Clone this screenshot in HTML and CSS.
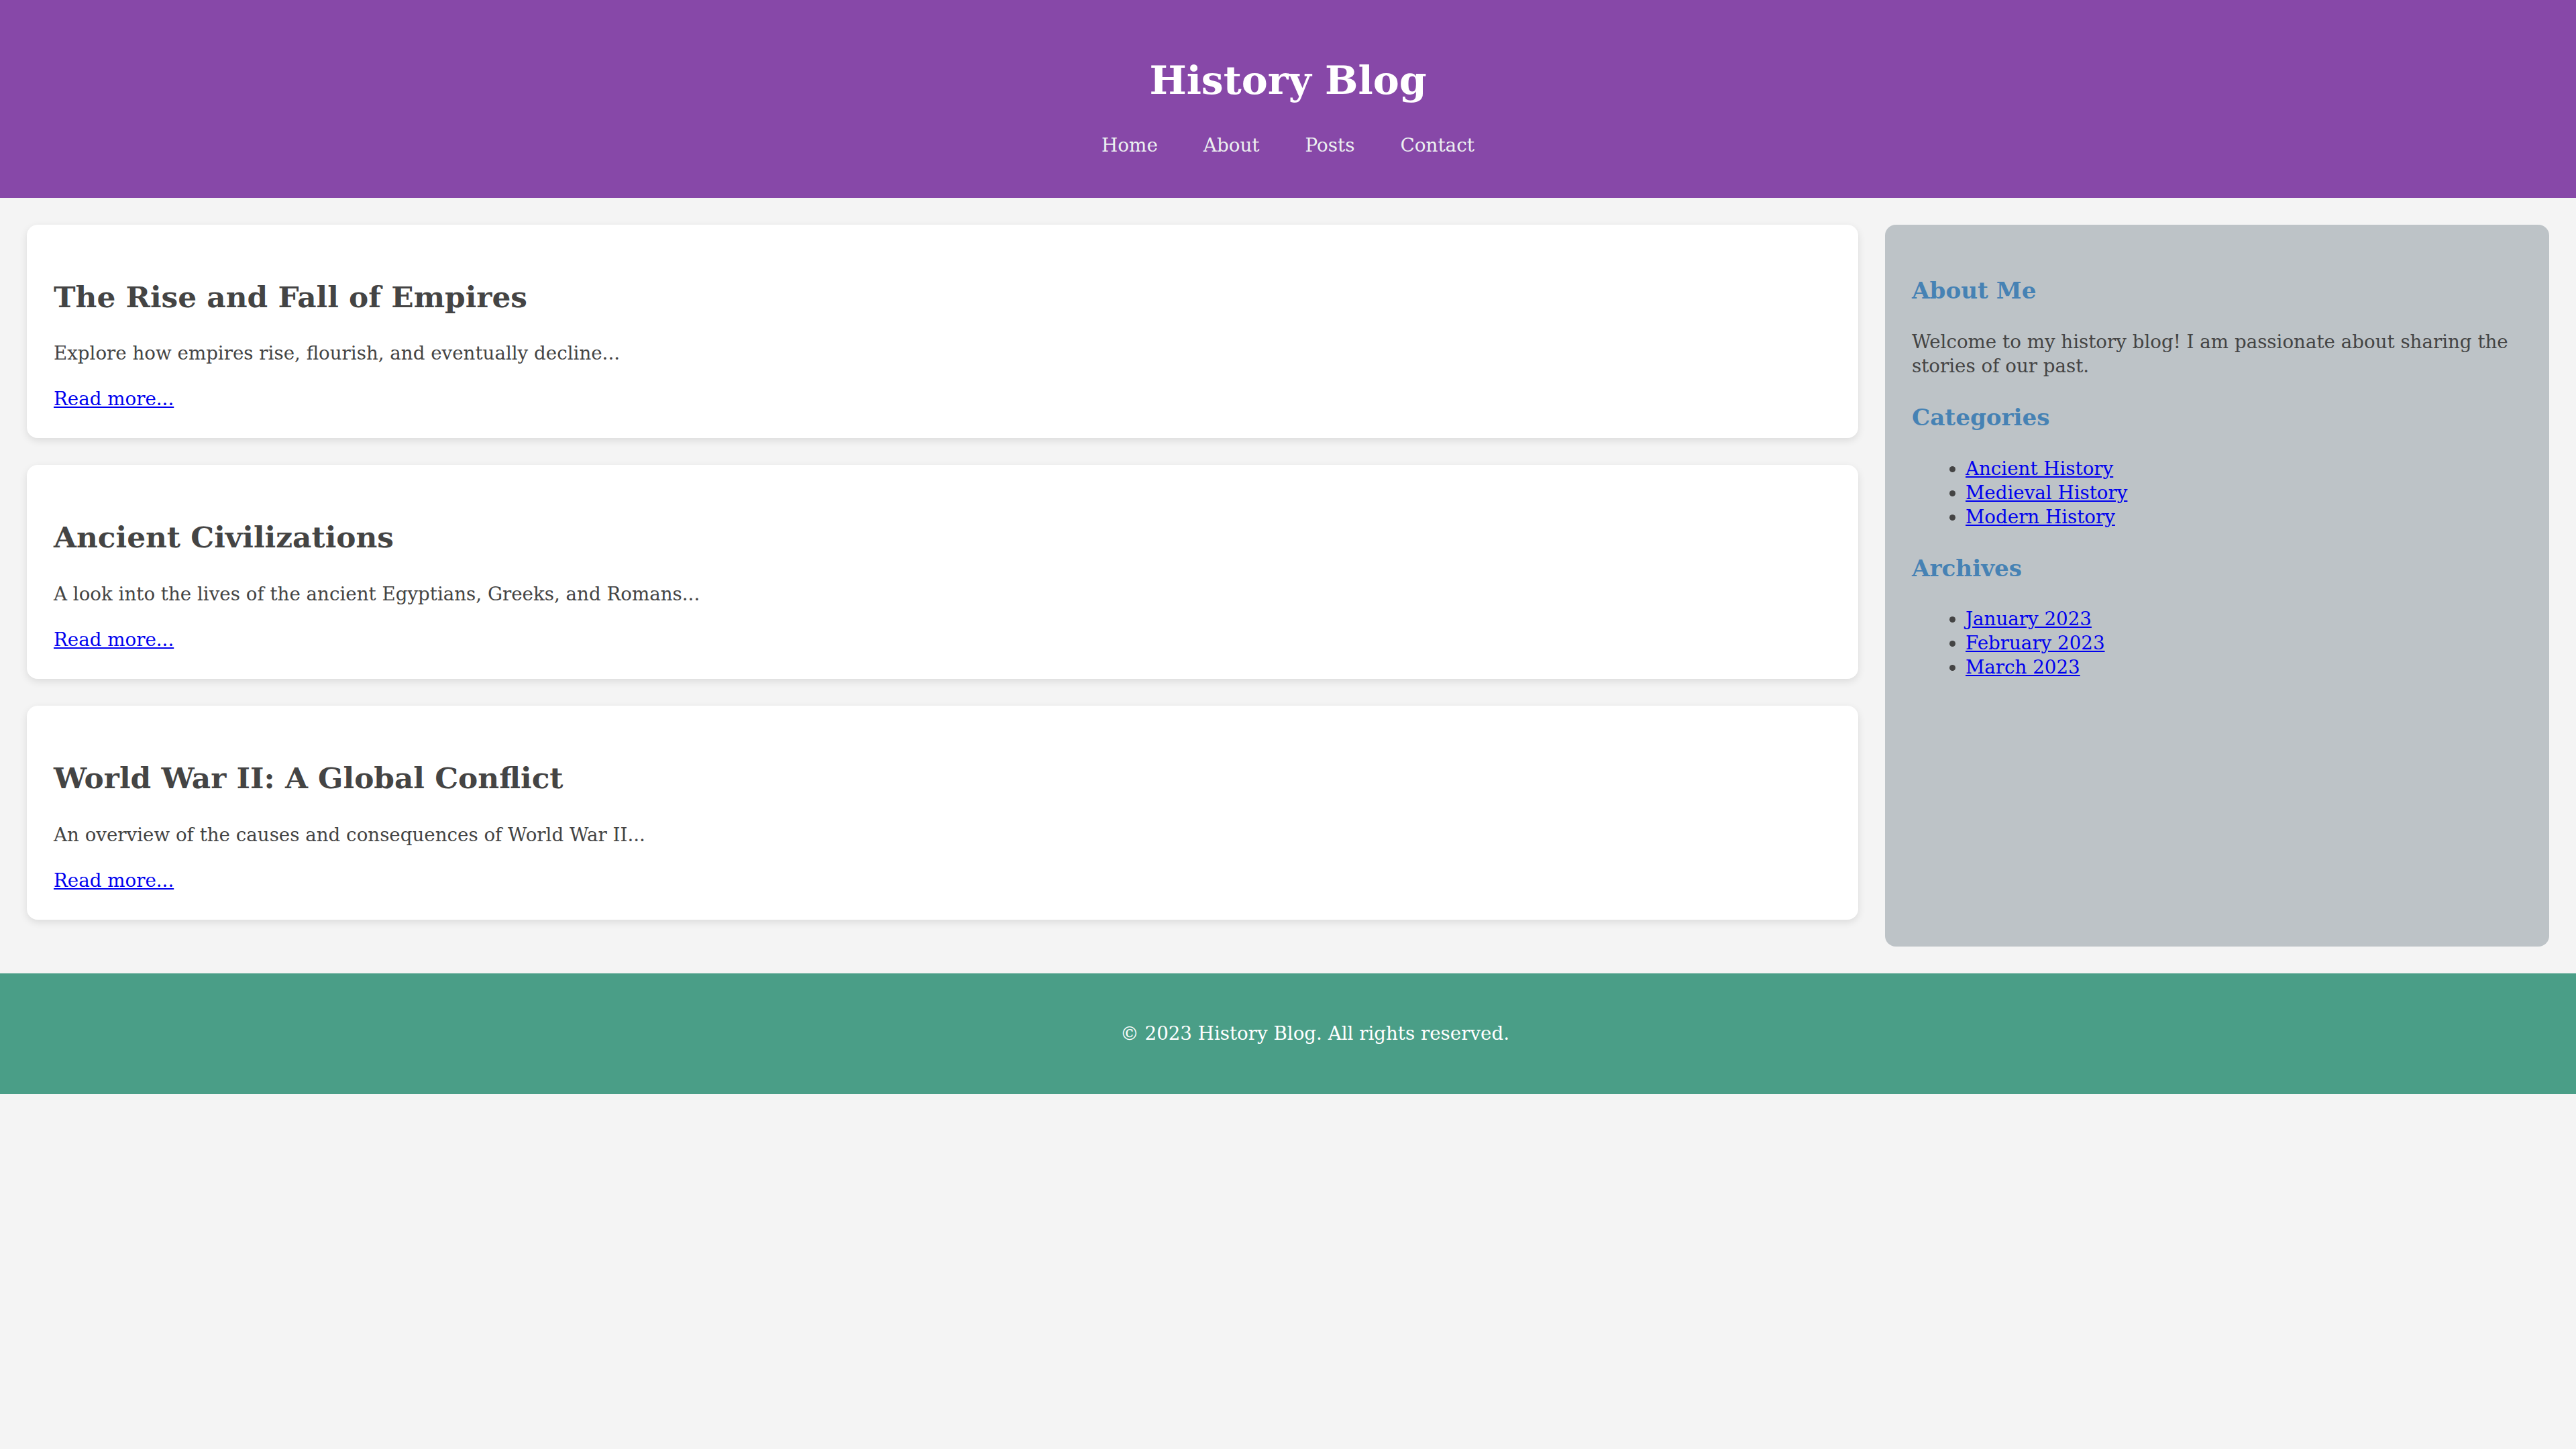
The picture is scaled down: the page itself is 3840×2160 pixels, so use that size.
FILE: index.html
```html
<!DOCTYPE html>
<html lang="en">
<head>
<meta charset="utf-8">
<title>History Blog</title>
<link rel="stylesheet" href="styles.css">
</head>
<body>
<header class="site-header">
  <h1 class="site-title">History Blog</h1>
  <nav class="site-nav">
    <a href="#">Home</a>
    <a href="#">About</a>
    <a href="#">Posts</a>
    <a href="#">Contact</a>
  </nav>
</header>
<div class="layout">
  <main class="posts">
    <article class="post">
      <h2 class="post-title">The Rise and Fall of Empires</h2>
      <p class="post-excerpt">Explore how empires rise, flourish, and eventually decline...</p>
      <a class="read-more" href="#">Read more...</a>
    </article>
    <article class="post">
      <h2 class="post-title">Ancient Civilizations</h2>
      <p class="post-excerpt">A look into the lives of the ancient Egyptians, Greeks, and Romans...</p>
      <a class="read-more" href="#">Read more...</a>
    </article>
    <article class="post">
      <h2 class="post-title">World War II: A Global Conflict</h2>
      <p class="post-excerpt">An overview of the causes and consequences of World War II...</p>
      <a class="read-more" href="#">Read more...</a>
    </article>
  </main>
  <aside class="sidebar">
    <h3 class="side-title">About Me</h3>
    <p class="side-text">Welcome to my history blog! I am passionate about sharing the stories of our past.</p>
    <h3 class="side-title">Categories</h3>
    <ul class="side-list">
      <li><a href="#">Ancient History</a></li>
      <li><a href="#">Medieval History</a></li>
      <li><a href="#">Modern History</a></li>
    </ul>
    <h3 class="side-title">Archives</h3>
    <ul class="side-list">
      <li><a href="#">January 2023</a></li>
      <li><a href="#">February 2023</a></li>
      <li><a href="#">March 2023</a></li>
    </ul>
  </aside>
</div>
<footer class="site-footer">
  <p class="footer-text">&copy; 2023 History Blog. All rights reserved.</p>
</footer>
</body>
</html>
```

FILE: styles.css
```css
html, body {
  margin: 0;
  padding: 0;
}

body {
  background: #f4f4f4;
  color: #444444;
  font-family: "DejaVu Serif", "Liberation Serif", serif;
  font-size: 27.7px;
  line-height: 36px;
}

.site-header {
  background: #8748a8;
  color: #ffffff;
  text-align: center;
  padding: 40px 0 60px;
}

.site-title {
  margin: 42.9px 0;
  font-size: 58.5px;
  line-height: 73px;
  font-weight: bold;
  color: #ffffff;
}

.site-nav {
  display: flex;
  justify-content: center;
  gap: 68px;
  font-size: 27.8px;
  line-height: 36px;
}

.site-nav a {
  color: #ecf0f1;
  text-decoration: none;
}

.layout {
  display: grid;
  grid-template-columns: 1fr 990px;
  column-gap: 40px;
  padding: 40px;
  align-items: stretch;
}

.posts {
  min-width: 0;
}

.post {
  background: #ffffff;
  border-radius: 16px;
  padding: 40px;
  margin-bottom: 40px;
  box-shadow: 0 4px 12px rgba(0, 0, 0, 0.1);
}

.post-title {
  margin: 39.84px 0;
  font-size: 43.8px;
  line-height: 55px;
  font-weight: bold;
  color: #444444;
}

.post-excerpt {
  margin: 32px 0;
}

.read-more {
  color: #0000ee;
}

.sidebar {
  background: #bdc3c7;
  border-radius: 16px;
  padding: 40px;
}

.side-title {
  margin: 37.44px 0;
  font-size: 34.2px;
  line-height: 42px;
  font-weight: bold;
  color: #4682b4;
}

.side-text {
  margin: 32px 0;
}

.side-list {
  margin: 32px 0;
  padding-left: 80px;
}

.side-list a {
  color: #0000ee;
}

.site-footer {
  background: #4a9e87;
  color: #ffffff;
  text-align: center;
  padding: 40px 0 40px 80px;
}

.footer-text {
  margin: 32px 0;
}
```
